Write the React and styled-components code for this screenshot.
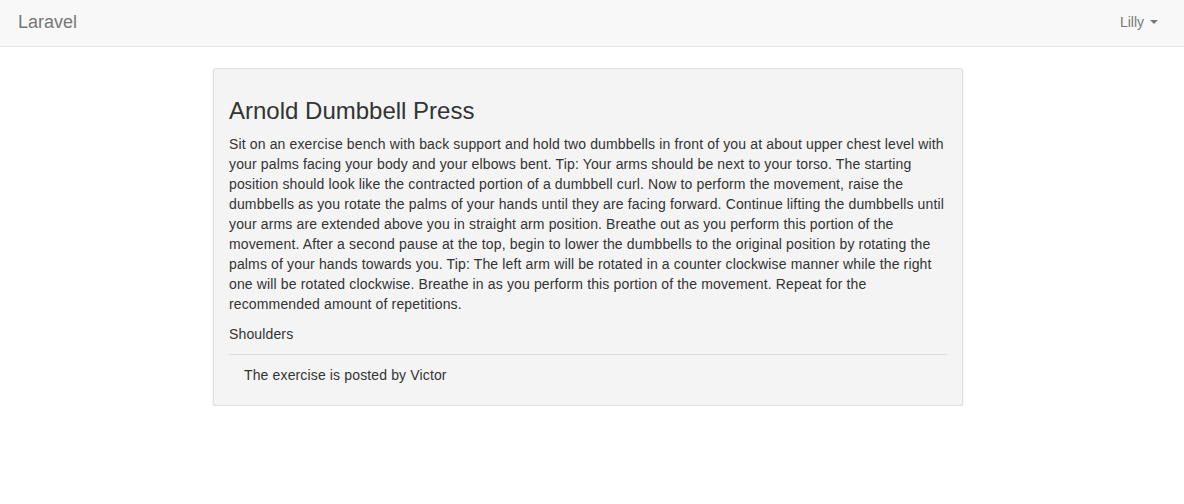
import React from "react";
import styled, { createGlobalStyle } from "styled-components";

const Global = createGlobalStyle`
  html, body { margin: 0; padding: 0; background: #fff; }
  body {
    font-family: "Liberation Sans", Arial, Helvetica, sans-serif;
    font-size: 14px;
    line-height: 20px;
    color: #333;
  }
  * { box-sizing: border-box; }
`;

const Navbar = styled.nav`
  height: 47px;
  background: #f8f8f8;
  border-bottom: 1px solid #e7e7e7;
  display: flex;
  align-items: center;
  justify-content: space-between;
  padding: 0 26px 0 18px;
`;

const Brand = styled.a`
  font-size: 18px;
  color: #777;
  text-decoration: none;
  line-height: 20px;
  padding-bottom: 3px;
`;

const UserMenu = styled.a`
  display: flex;
  align-items: center;
  gap: 6px;
  color: #777;
  font-size: 14px;
  text-decoration: none;
  padding-bottom: 2px;
`;

const Caret = styled.span`
  display: inline-block;
  width: 0;
  height: 0;
  border-top: 4px solid #777;
  border-left: 4px solid transparent;
  border-right: 4px solid transparent;
`;

const Main = styled.main`
  padding-top: 21px;
`;

const Card = styled.section`
  width: 750px;
  margin-left: 213px;
  background: #f4f4f4;
  border: 1px solid #e0e0e0;
  border-radius: 3px;
  box-shadow: 0 1px 2px rgba(0, 0, 0, 0.14);
  padding: 15px 15px 20px;
  letter-spacing: 0.14px;
`;

const Title = styled.h3`
  font-size: 24px;
  font-weight: 500;
  line-height: 26px;
  margin: 14px 0 10px;
  color: #333;
  letter-spacing: 0;
`;

const Text = styled.p`
  margin: 0 0 10px;
`;

const Divider = styled.hr`
  border: 0;
  border-top: 1px solid #ddd;
  margin: 0 0 10px;
`;

const Footer = styled.div`
  padding-left: 15px;
`;

export default function App() {
  return (
    <>
      <Global />
      <Navbar>
        <Brand href="#">Laravel</Brand>
        <UserMenu href="#">
          Lilly <Caret />
        </UserMenu>
      </Navbar>
      <Main>
        <Card>
          <Title>Arnold Dumbbell Press</Title>
          <Text>
            Sit on an exercise bench with back support and hold two dumbbells in front of you at about upper chest level with your palms facing your body and your elbows bent. Tip: Your arms should be next to your torso. The starting position should look like the contracted portion of a dumbbell curl. Now to perform the movement, raise the dumbbells as you rotate the palms of your hands until they are facing forward. Continue lifting the dumbbells until your arms are extended above you in straight arm position. Breathe out as you perform this portion of the movement. After a second pause at the top, begin to lower the dumbbells to the original position by rotating the palms of your hands towards you. Tip: The left arm will be rotated in a counter clockwise manner while the right one will be rotated clockwise. Breathe in as you perform this portion of the movement. Repeat for the recommended amount of repetitions.
          </Text>
          <Text>Shoulders</Text>
          <Divider />
          <Footer>The exercise is posted by Victor</Footer>
        </Card>
      </Main>
    </>
  );
}
